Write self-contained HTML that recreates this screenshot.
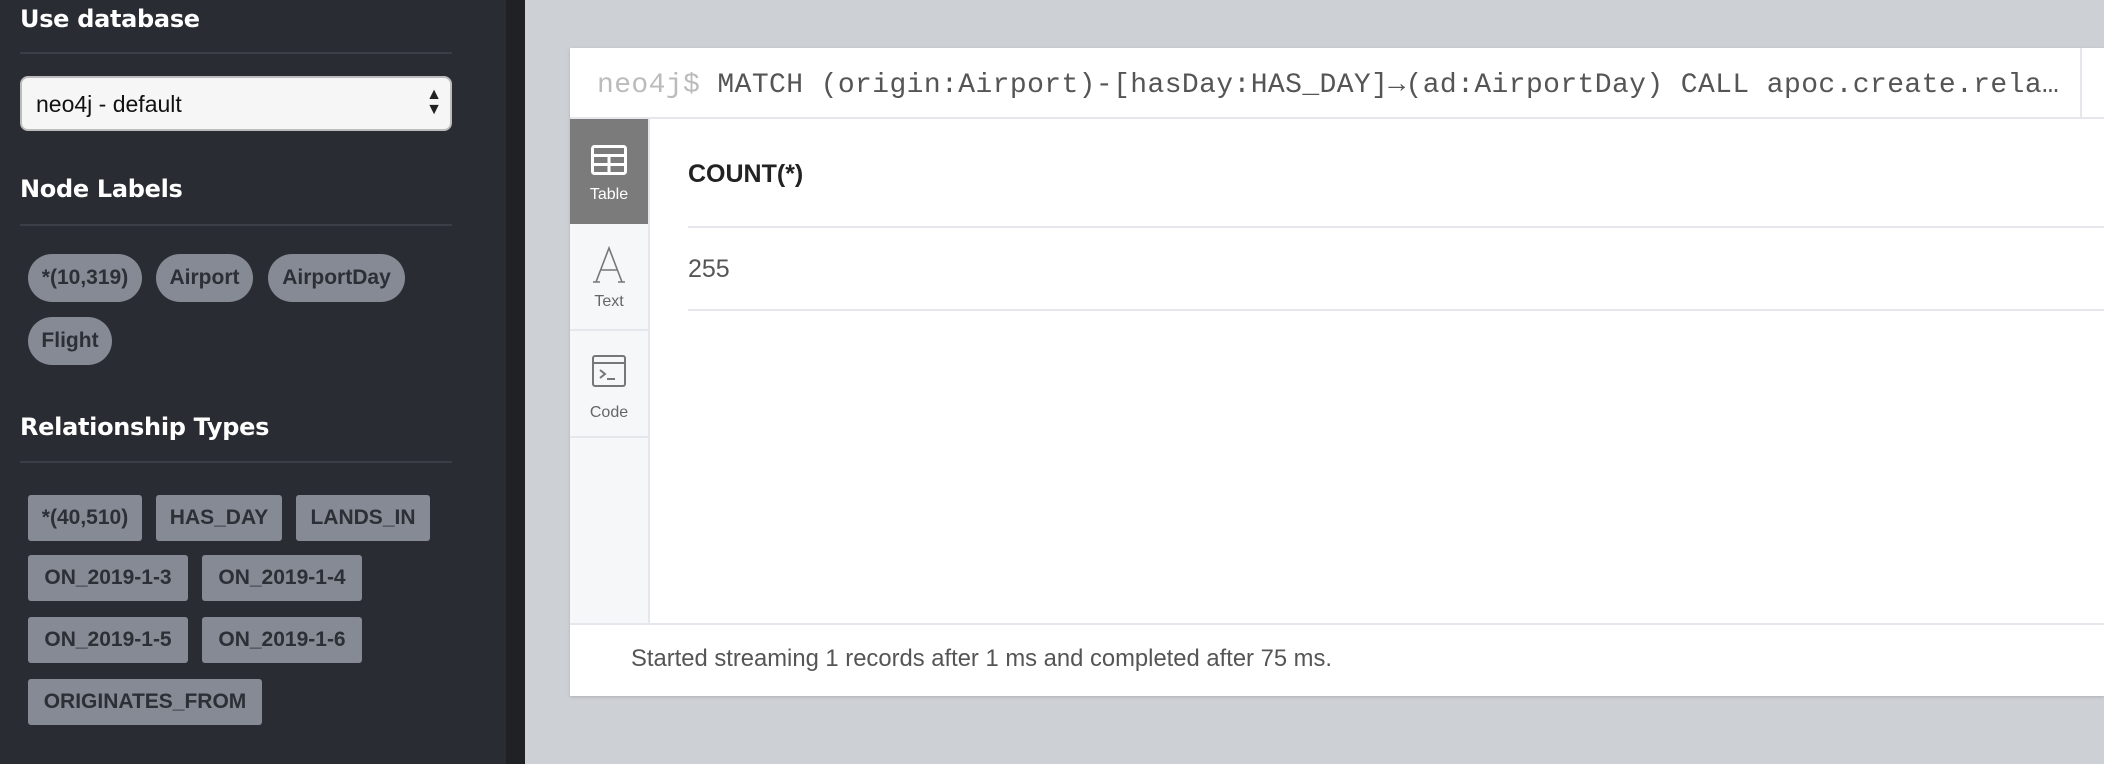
<!DOCTYPE html>
<html><head><style>
*{margin:0;padding:0;box-sizing:border-box}
body{width:2104px;height:764px;overflow:hidden;background:#cdd0d5;position:relative;font-family:"Liberation Sans",sans-serif}
.side{position:absolute;left:0;top:0;width:506px;height:764px;background:#292c32}
.strip{position:absolute;left:506px;top:0;width:19px;height:764px;background:#1f2125}
.h{position:absolute;left:20px;color:#fff;font-family:"DejaVu Sans",sans-serif;font-weight:bold;font-size:24px;line-height:30px;letter-spacing:-0.3px}
.hr{position:absolute;left:20px;width:432px;height:2px;background:#3a3e47}
.sel{position:absolute;left:20px;top:76px;width:432px;height:55px;background:#f6f6f6;border:2px solid #bcbcbc;border-radius:8px;font-size:23px;color:#111;padding:11px 14px;line-height:30px}
.pill{position:absolute;height:48px;background:#868a95;color:#2c2f36;font-weight:bold;font-size:21px;line-height:48px;text-align:center;border-radius:24px}
.chip{position:absolute;height:46px;background:#868a95;color:#2c2f36;font-weight:bold;font-size:21px;line-height:46px;text-align:center;border-radius:3px}
.card{position:absolute;left:570px;top:48px;width:1534px;height:648px;background:#fff;box-shadow:0 1px 3px rgba(0,0,0,.15)}
.ed{position:absolute;left:0;top:0;width:1510px;height:71px;overflow:hidden;font-family:"Liberation Mono",monospace;font-size:28px;color:#555;line-height:76px;padding-left:27px;white-space:nowrap;letter-spacing:0.4px}
.tabs{position:absolute;left:0;top:71px;width:80px;height:505px;background:#f6f7f9;border-right:2px solid #e5e7ec}
.tab{position:absolute;left:0;width:78px;text-align:center;font-size:16px;color:#666;border-bottom:2px solid #e5e7ec}
</style></head><body>
<div class="side">
<div class="h" style="top:4px">Use database</div>
<div class="hr" style="top:52px"></div>
<div class="sel">neo4j - default<span style="position:absolute;right:8px;top:9px;font-size:16px;line-height:15px;color:#222">▲<br>▼</span></div>
<div class="h" style="top:174px">Node Labels</div>
<div class="hr" style="top:224px"></div>
<div class="pill" style="left:28px;top:254px;width:114px">*(10,319)</div>
<div class="pill" style="left:156px;top:254px;width:97px">Airport</div>
<div class="pill" style="left:268px;top:254px;width:137px">AirportDay</div>
<div class="pill" style="left:28px;top:317px;width:84px">Flight</div>
<div class="h" style="top:412px">Relationship Types</div>
<div class="hr" style="top:461px"></div>
<div class="chip" style="left:28px;top:495px;width:114px">*(40,510)</div>
<div class="chip" style="left:156px;top:495px;width:126px">HAS_DAY</div>
<div class="chip" style="left:296px;top:495px;width:134px">LANDS_IN</div>
<div class="chip" style="left:28px;top:555px;width:160px">ON_2019-1-3</div>
<div class="chip" style="left:202px;top:555px;width:160px">ON_2019-1-4</div>
<div class="chip" style="left:28px;top:617px;width:160px">ON_2019-1-5</div>
<div class="chip" style="left:202px;top:617px;width:160px">ON_2019-1-6</div>
<div class="chip" style="left:28px;top:679px;width:234px">ORIGINATES_FROM</div>
</div>
<div class="strip"></div>
<div class="card">
<div class="ed"><span style="color:#bbb">neo4j$</span> MATCH (origin:Airport)-[hasDay:HAS_DAY]→(ad:AirportDay) CALL apoc.create.rela…</div>
<div style="position:absolute;left:0;top:69px;right:0;height:2px;background:#e5e7ec"></div>
<div style="position:absolute;left:1510px;top:0;width:2px;height:71px;background:#e5e7ec"></div>
<div class="tabs">
<div class="tab" style="top:0;height:105px;background:#7b7b7b;color:#fff;border:none">
<svg width="36" height="30" viewBox="0 0 36 30" style="margin-top:26px"><rect x="1.5" y="1.5" width="33" height="27" rx="2" fill="none" stroke="#fff" stroke-width="3"/><path d="M1.5 10.5H34.5M1.5 19.5H34.5M18 10.5V28.5" stroke="#fff" stroke-width="3"/></svg>
<div style="margin-top:6px">Table</div></div>
<div class="tab" style="top:105px;height:107px">
<svg width="34" height="38" viewBox="0 0 34 38" style="margin-top:22px"><path d="M4 36L17 2L30 36M9 24H25M1 36H8M26 36H33" fill="none" stroke="#777" stroke-width="1.6"/></svg>
<div style="margin-top:4px">Text</div></div>
<div class="tab" style="top:212px;height:107px">
<svg width="34" height="32" viewBox="0 0 34 32" style="margin-top:24px"><rect x="1" y="1" width="32" height="30" rx="2" fill="none" stroke="#777" stroke-width="2"/><path d="M1 8H33M8 15l5 4-5 4M15 24H23" fill="none" stroke="#777" stroke-width="2"/></svg>
<div style="margin-top:12px">Code</div></div>
</div>
<div style="position:absolute;left:118px;top:112px;font-weight:bold;font-size:25px;color:#222">COUNT(*)</div>
<div style="position:absolute;left:118px;top:178px;right:0;height:2px;background:#e5e7ec"></div>
<div style="position:absolute;left:118px;top:207px;font-size:25px;color:#555">255</div>
<div style="position:absolute;left:118px;top:261px;right:0;height:2px;background:#e5e7ec"></div>
<div style="position:absolute;left:0;top:575px;right:0;height:2px;background:#e5e7ec"></div>
<div style="position:absolute;left:61px;top:597px;font-size:23.8px;color:#555">Started streaming 1 records after 1 ms and completed after 75 ms.</div>
</div>
</body></html>
